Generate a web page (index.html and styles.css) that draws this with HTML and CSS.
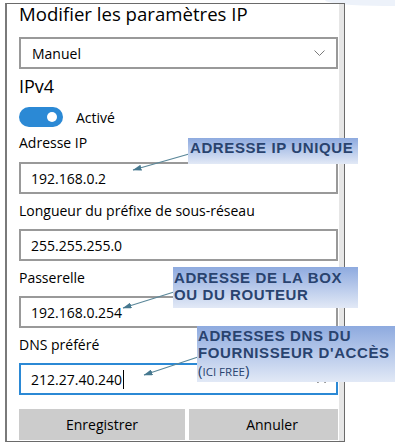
FILE: index.html
```html
<!DOCTYPE html>
<html lang="fr">
<head>
    <meta charset="UTF-8">
    <meta name="viewport" content="width=device-width, initial-scale=1.0">
    <title>Modifier les paramètres IP</title>
    <link rel="stylesheet" href="styles.css">
</head>
<body>
    <div class="glow"></div>

    <div class="window">
        <div class="pane">
            <h1 class="title">Modifier les paramètres IP</h1>

            <div class="select">
                <span>Manuel</span>
                <svg class="chevron" width="11" height="6" viewBox="0 0 11 6">
                    <polyline points="0.5,0.5 5.5,5.5 10.5,0.5" fill="none" stroke="#7a7a7a" stroke-width="1"/>
                </svg>
            </div>

            <h2 class="section">IPv4</h2>

            <div class="toggle-row">
                <span class="toggle"><span class="knob"></span></span>
                <span>Activé</span>
            </div>

            <label class="label first">Adresse IP</label>
            <div class="field first">192.168.0.2</div>

            <label class="label">Longueur du préfixe de sous-réseau</label>
            <div class="field">255.255.255.0</div>

            <label class="label">Passerelle</label>
            <div class="field">192.168.0.254</div>

            <label class="label">DNS préféré</label>
            <div class="field focused">212.27.40.240<span class="caret"></span>
                <svg class="clear" width="9" height="9" viewBox="0 0 9 9">
                    <path d="M0.5 0.5 L8.5 8.5 M8.5 0.5 L0.5 8.5" stroke="#333" stroke-width="1.2"/>
                </svg>
            </div>

            <div class="buttons">
                <div class="btn">Enregistrer</div>
                <div class="btn">Annuler</div>
            </div>
        </div>
        <div class="scrollbar"></div>
    </div>

    <!-- annotation arrows -->
    <svg class="arrows" width="395" height="445" viewBox="0 0 395 445">
        <defs>
            <marker id="head" markerWidth="9" markerHeight="6" refX="8.5" refY="3" orient="auto" markerUnits="userSpaceOnUse">
                <path d="M0 0 L9 3 L0 6 Z" fill="#46788f"/>
            </marker>
        </defs>
        <line x1="189" y1="154" x2="133" y2="170" stroke="#5a8799" stroke-width="1.2" marker-end="url(#head)"/>
        <line x1="174" y1="292" x2="123" y2="308" stroke="#5a8799" stroke-width="1.2" marker-end="url(#head)"/>
        <line x1="198" y1="357" x2="144" y2="375" stroke="#5a8799" stroke-width="1.2" marker-end="url(#head)"/>
    </svg>

    <div class="note note-ip">ADRESSE IP UNIQUE</div>
    <div class="note note-box">ADRESSE DE LA BOX<br>OU DU ROUTEUR</div>
    <div class="note note-dns">ADRESSES DNS DU<br>FOURNISSEUR D'ACCÈS<br><span class="small"><span class="paren">(</span>ICI FREE<span class="paren">)</span></span></div>
</body>
</html>
```

FILE: styles.css
```css
body {
    margin: 0;
    background-color: #fff;
    font-family: "Open Sans", "Noto Sans", sans-serif;
    color: #000;
    position: relative;
    width: 395px;
    height: 445px;
    overflow: hidden;
}

/* faint shape peeking at the top right */
.glow {
    position: absolute;
    top: 0;
    right: 0;
    width: 70px;
    height: 6px;
    border-radius: 0 0 0 60px / 0 0 0 6px;
    background-color: #edf2fa;
}

.window {
    position: relative;
    display: flex;
    box-sizing: border-box;
    width: 340px;
    height: 439px;
    margin: 3px 0 0 5px;
    border: 1px solid #6a6a6a;
    border-left: 2px solid #7a7a7a;
    background-color: #fff;
}

.pane {
    flex: 1;
    padding: 0 1px 0 12px;
}

.scrollbar {
    width: 5px;
    background-color: #e6e6e6;
}

.title {
    margin: 0;
    font-size: 18.6px;
    font-weight: 400;
    line-height: 20px;
    white-space: nowrap;
}

.select {
    display: flex;
    align-items: center;
    justify-content: space-between;
    box-sizing: border-box;
    width: 319px;
    height: 32px;
    margin-top: 13px;
    padding: 0 11px 0 11px;
    border: 2px solid #999;
    font-size: 14px;
}

.section {
    margin: 7px 0 0;
    font-size: 18px;
    font-weight: 400;
    line-height: 20px;
}

.toggle-row {
    display: flex;
    align-items: center;
    gap: 13px;
    margin-top: 11px;
    height: 20px;
    font-size: 14px;
}

.toggle {
    position: relative;
    display: block;
    width: 44px;
    height: 20px;
    border-radius: 10px;
    background-color: #2b89d5;
}

.knob {
    position: absolute;
    top: 5px;
    right: 6px;
    width: 10px;
    height: 10px;
    border-radius: 50%;
    background-color: #fff;
}

.label {
    display: block;
    margin-top: 7px;
    font-size: 14px;
    line-height: 20px;
    white-space: nowrap;
}

.label.first {
    margin-top: 6px;
}

.field {
    position: relative;
    display: flex;
    align-items: center;
    box-sizing: border-box;
    width: 319px;
    height: 32px;
    margin-top: 8px;
    padding-left: 10px;
    border: 2px solid #999;
    font-size: 14px;
}

.field.first {
    margin-top: 9px;
}

.field.focused {
    border-color: #2b89d5;
}

.caret {
    display: inline-block;
    width: 1px;
    height: 19px;
    margin-left: 1px;
    background-color: #000;
}

.clear {
    position: absolute;
    right: 10px;
    top: 9px;
}

.buttons {
    display: grid;
    grid-template-columns: 166px 166px;
    gap: 4px;
    width: 319px;
    margin-top: 14px;
    overflow: hidden;
}

.btn {
    height: 31px;
    line-height: 31px;
    text-align: center;
    background-color: #cccccc;
    font-size: 14px;
}

.arrows {
    position: absolute;
    top: 0;
    left: 0;
    pointer-events: none;
}

.note {
    position: absolute;
    box-sizing: border-box;
    padding-left: 1px;
    background: linear-gradient(to bottom, #8eaadf, #e2e9f6);
    color: #29436f;
    font-family: "Liberation Sans", Arial, sans-serif;
    font-weight: bold;
    font-size: 15px;
    letter-spacing: 0.6px;
    line-height: 17px;
    white-space: nowrap;
}

.note-ip {
    top: 138px;
    left: 188px;
    width: 170px;
    height: 26px;
    padding: 1px 0 0 2px;
}

.note-box {
    top: 267px;
    left: 173px;
    width: 185px;
    height: 41px;
    padding-top: 2px;
}

.note-dns {
    top: 326px;
    left: 197px;
    width: 198px;
    height: 56px;
    padding-top: 1px;
}

.small {
    font-family: "Open Sans", "Noto Sans", sans-serif;
    font-weight: 400;
    font-size: 11.5px;
    letter-spacing: 0;
    line-height: 19px;
}

.paren {
    font-size: 15px;
}
```
